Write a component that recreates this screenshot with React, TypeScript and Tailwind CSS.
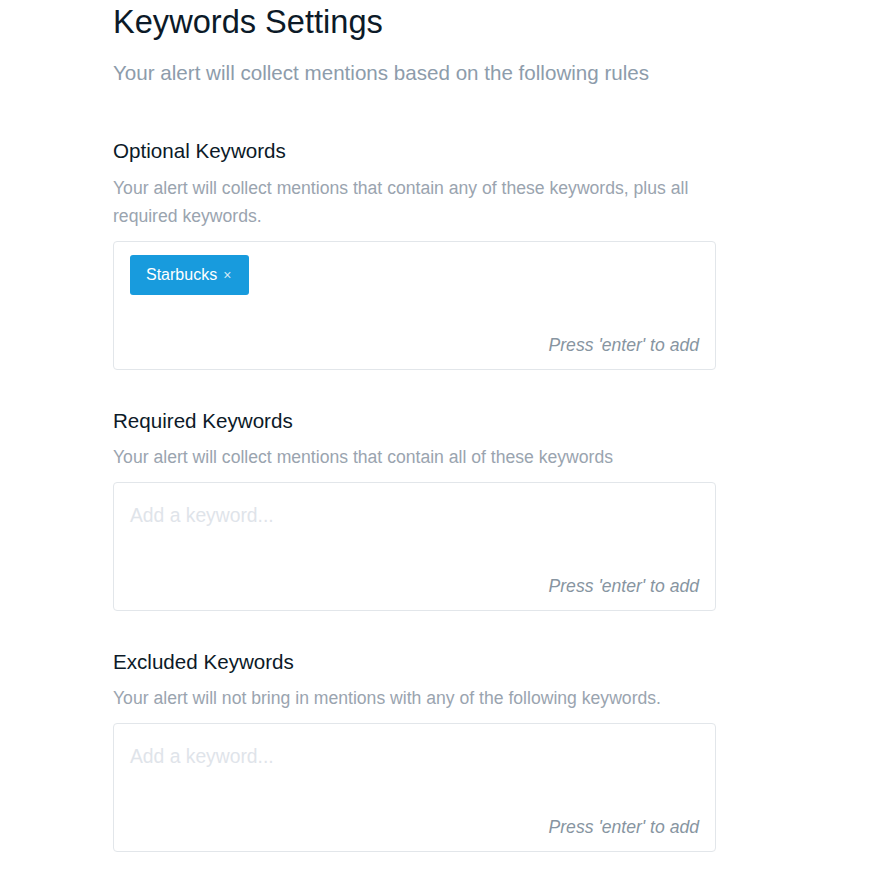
import React from "react";

function Section({
  title,
  desc,
  children,
  first,
}: {
  title: string;
  desc: React.ReactNode;
  children: React.ReactNode;
  first?: boolean;
}) {
  return (
    <div className={first ? "mt-[48px]" : "mt-[36px]"}>
      <h2 className="text-[20.6px] leading-[30px] text-[#0c1a28]">{title}</h2>
      <p className={(first ? "mt-[8px]" : "mt-[7px]") + " text-[17.6px] leading-[28px] text-[#9aa4af]"}>{desc}</p>
      <div className={(first ? "mt-[11px]" : "mt-[11px]") + " h-[129px] w-[603px] rounded-[4px] border border-[#e2e6ea] bg-white pl-4 pr-4 pt-[13px] pb-[14px] flex flex-col justify-between"}>
        {children}
        <div className="text-right text-[17.6px] italic text-[#8795a1] leading-[20px]">
          Press 'enter' to add
        </div>
      </div>
    </div>
  );
}

export default function App() {
  return (
    <div
      className="min-h-[876px] w-[874px] bg-white pl-[113px]"
      style={{ fontFamily: '"Liberation Sans", Arial, sans-serif' }}
    >
      <h1 className="pt-[2px] text-[32.6px] leading-[40px] text-[#0c1a28]">Keywords Settings</h1>
      <p className="mt-[16px] text-[20.6px] leading-[30px] text-[#8d9cab]">
        Your alert will collect mentions based on the following rules
      </p>
      <Section
        first
        title="Optional Keywords"
        desc={
          <>
            Your alert will collect mentions that contain any of these keywords, plus all
            <br />
            required keywords.
          </>
        }
      >
        <div className="flex">
          <span className="inline-flex h-[40px] items-center rounded-[3px] bg-[#189bdd] pl-[16px] pr-[18px] text-[16px] text-white">
            Starbucks
            <span className="ml-[6px] text-[14px] text-[#cfe9f7]">×</span>
          </span>
        </div>
      </Section>
      <Section
        title="Required Keywords"
        desc="Your alert will collect mentions that contain all of these keywords"
      >
        <div className="pt-[1px] text-[19.3px] leading-[38px] text-[#dfe4ea]">Add a keyword...</div>
      </Section>
      <Section
        title="Excluded Keywords"
        desc="Your alert will not bring in mentions with any of the following keywords."
      >
        <div className="pt-[1px] text-[19.3px] leading-[38px] text-[#dfe4ea]">Add a keyword...</div>
      </Section>
    </div>
  );
}
